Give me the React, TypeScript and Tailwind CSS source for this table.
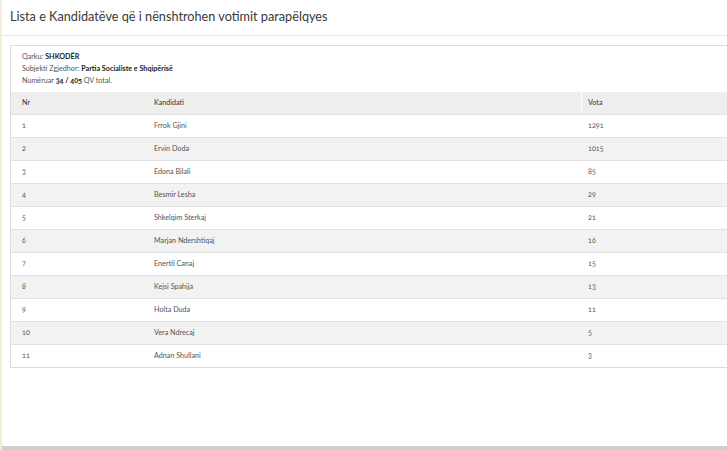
import React from 'react';

// kandidatët dhe votat, renditur sipas votave
const rows: [number, string, string][] = [
  [1, 'Frrok Gjini', '1291'],
  [2, 'Ervin Doda', '1015'],
  [3, 'Edona Bilali', '85'],
  [4, 'Besmir Lesha', '29'],
  [5, 'Shkelqim Sterkaj', '21'],
  [6, 'Marjan Ndershtiqaj', '16'],
  [7, 'Enertil Canaj', '15'],
  [8, 'Kejsi Spahija', '13'],
  [9, 'Holta Duda', '11'],
  [10, 'Vera Ndrecaj', '5'],
  [11, 'Adnan Shullani', '3'],
];

export default function App() {
  return (
    <div
      className="w-[727px] h-[450px] overflow-hidden bg-white flex flex-col border-l-2 border-[#f3ecd6] text-[#555] oldstyle-nums"
      style={{ fontFamily: 'Lato, "Open Sans", sans-serif' }}
    >
      <div className="h-[36px] shrink-0 border-b border-[#e8e8e8] pl-[8px] pt-[7px] text-[12.7px] leading-[18px] text-[#3a3a3a]">
        Lista e Kandidatëve që i nënshtrohen votimit parapëlqyes
      </div>
      <div className="flex-1 pt-[9px] pl-[8px]">
        <div className="border-t border-l border-[#dcdcdc] w-[740px]">
          <div className="pl-[11px] pt-[5px] pb-[5px] text-[7.2px] leading-[12px]">
            <div>
              Qarku: <b className="text-[#222]">SHKODËR</b>
            </div>
            <div>
              Subjekti Zgjedhor: <b className="text-[#222]">Partia Socialiste e Shqipërisë</b>
            </div>
            <div>
              Numëruar <b className="text-[#222]">34 / 405</b> QV total.
            </div>
          </div>
          <div className="text-[7.2px] border-b border-[#dcdcdc]">
            <div className="grid grid-cols-[136px_434px_1fr] h-[22px] items-center bg-[#eeeeee] text-[#333]">
              <div className="pl-[11px]">Nr</div>
              <div className="pl-[7px]">Kandidati</div>
              <div className="h-full flex items-center pl-[6px] border-l border-white">Vota</div>
            </div>
            {rows.map(([nr, name, vota]) => (
              <div
                key={nr}
                className={
                  'grid grid-cols-[136px_434px_1fr] h-[23px] items-center border-t border-[#e2e2e2] ' +
                  (nr % 2 === 0 ? 'bg-[#f2f2f2]' : 'bg-white')
                }
              >
                <div className="pl-[11px]">{nr}</div>
                <div className="pl-[7px]">{name}</div>
                <div className="pl-[7px]">{vota}</div>
              </div>
            ))}
          </div>
        </div>
      </div>
      <div className="h-[4px] shrink-0 bg-[#cfcfcf]" />
    </div>
  );
}
